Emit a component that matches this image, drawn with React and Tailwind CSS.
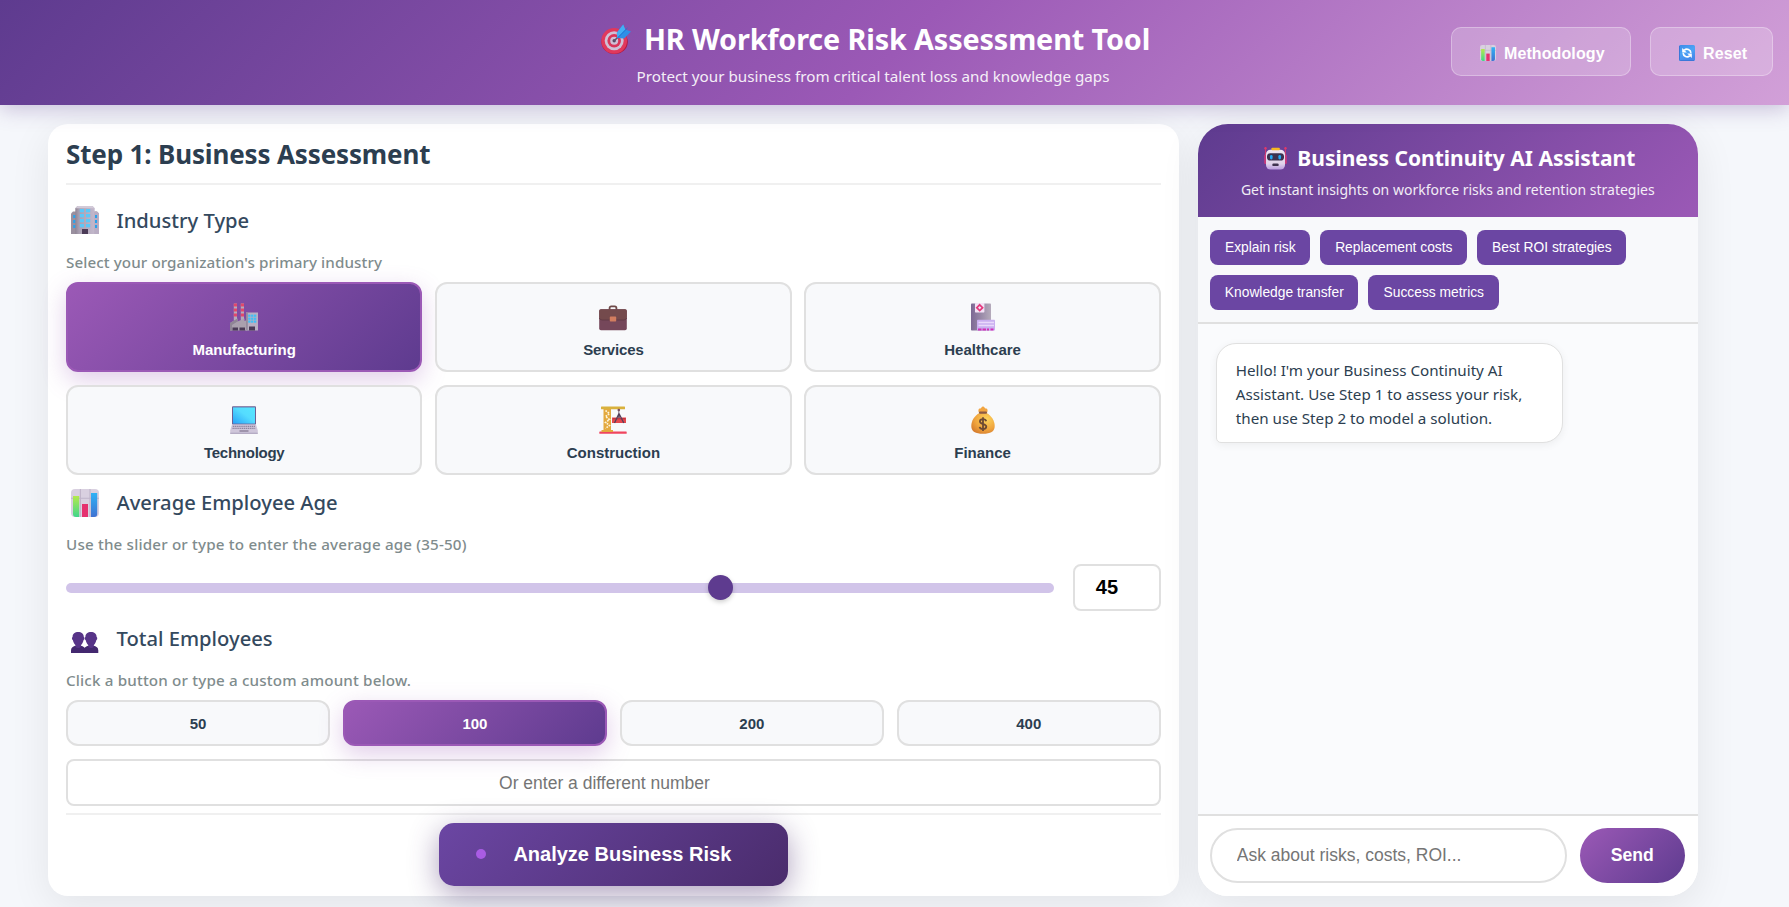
import React from "react";

/* ---------- Pictograms ---------- */

function TargetIcon({ className }) {
  return (
    <svg viewBox="0 0 30 30" className={className}>
      <ellipse cx="13.6" cy="18" rx="13.2" ry="12" fill="#b3173d" />
      <circle cx="13.2" cy="16.8" r="12.9" fill="#e0385c" />
      <circle cx="13.2" cy="16.8" r="9.5" fill="#cfc0d6" />
      <circle cx="13.2" cy="16.8" r="6.8" fill="#d93559" />
      <circle cx="13.2" cy="16.8" r="4" fill="#cfc0d6" />
      <circle cx="13.2" cy="16.8" r="1.7" fill="#5a4a66" />
      <path d="M13.2 16.8 L22 8.2" stroke="#5b5470" strokeWidth="1.6" />
      <path d="M16.4 14 L15.800 8.800 L22.2 0.4 L24.2 5.4 L30 7.6 L23.2 14.400 Z" fill="#2f8fe8" />
      <path d="M15.800 8.800 L22.2 0.4 L24.2 5.4 L16.4 14 Z" fill="#43aef5" />
      <path d="M16.400 14 L26.500 4" stroke="#1f74d0" strokeWidth="1" />
    </svg>
  );
}

function ChartIcon({ className }) {
  return (
    <svg viewBox="0 0 28 28" className={className}>
      <defs>
        <linearGradient id="chartGreen" x1="0" y1="0" x2="0" y2="1">
          <stop offset="0" stopColor="#b4e94c" />
          <stop offset="1" stopColor="#3fd68b" />
        </linearGradient>
        <linearGradient id="chartBlue" x1="0" y1="0" x2="0" y2="1">
          <stop offset="0" stopColor="#2fb2f5" />
          <stop offset="1" stopColor="#3f72d2" />
        </linearGradient>
      </defs>
      <rect width="28" height="28" rx="4" fill="#d9d0e0" />
      <path d="M0 9.3H28M9.4 0V28M19 0V28" stroke="#bfb4c9" strokeWidth="1.1" />
      <path d="M2 7h6.200v21H5a3 3 0 0 1-3-3z" fill="url(#chartGreen)" />
      <rect x="11" y="15" width="6" height="13" fill="#e5306f" />
      <path d="M20 4h6.200v21a3 3 0 0 1-3 3H20z" fill="url(#chartBlue)" />
    </svg>
  );
}

function RefreshIcon({ className }) {
  return (
    <svg viewBox="0 0 16 16" className={className}>
      <defs>
        <linearGradient id="refreshBg" x1="0" y1="0" x2="0.4" y2="1">
          <stop offset="0" stopColor="#3f8be8" />
          <stop offset="0.5" stopColor="#4ba4f6" />
          <stop offset="1" stopColor="#4589ea" />
        </linearGradient>
      </defs>
      <rect width="16" height="16" rx="1.6" fill="url(#refreshBg)" />
      <path d="M0.500 1v13.500a1 1 0 0 0 1 1H15" stroke="#3a78d8" strokeWidth="1" fill="none" />
      <path d="M5.300 5.200A4 4 0 0 1 11.900 7.800" stroke="#fff" strokeWidth="1.700" fill="none" />
      <path d="M10.700 10.800A4 4 0 0 1 4.100 8.200" stroke="#fff" strokeWidth="1.700" fill="none" />
      <path d="M3.200 3v4.600h4.600z" fill="#fff" />
      <path d="M12.800 13V8.400H8.200z" fill="#fff" />
    </svg>
  );
}

function OfficeIcon({ className }) {
  const rows = [3, 8, 13, 18];
  return (
    <svg viewBox="0 0 28 28" className={className}>
      <defs>
        <linearGradient id="officeBody" x1="0" y1="0" x2="1" y2="0">
          <stop offset="0" stopColor="#8f8595" />
          <stop offset="0.2" stopColor="#aaa0b2" />
          <stop offset="1" stopColor="#c3b8cc" />
        </linearGradient>
      </defs>
      <path d="M0 7.500L2 5.500H26L28 7.500V28H0z" fill="#9a909f" />
      <path d="M23.500 5.500H26L28 7.500V28H23.500z" fill="#b9adc3" />
      <path d="M4.300 2.200L6.500 0H21.500L23.700 2.200V28H4.300z" fill="url(#officeBody)" />
      <path d="M4.300 2.200L6.500 0H21.500L23.700 2.200z" fill="#d2cad8" />
      {rows.map((y) => (
        <g key={y} fill="#5cc8f8">
          <rect x="8.800" y={y} width="4.200" height="3.300" />
          <rect x="15" y={y} width="4.200" height="3.300" />
        </g>
      ))}
      {[9, 14, 19].map((y) => (
        <g key={y} fill="#2aa2ec">
          <rect x="2.200" y={y} width="2.100" height="3" />
          <rect x="24" y={y} width="2.100" height="3" />
        </g>
      ))}
      <rect x="11" y="23" width="6" height="5" fill="#4b3b57" />
    </svg>
  );
}

function FactoryIcon({ className }) {
  return (
    <svg viewBox="0 0 28 28" className={className}>
      <rect x="3.800" y="0.500" width="3.200" height="17" fill="#b5aabb" />
      <rect x="10.800" y="0.500" width="3.200" height="17" fill="#b5aabb" />
      {[0.500, 5.500, 10.500].map((y) => (
        <g key={y} fill="#e2486c">
          <rect x="3.800" y={y} width="3.200" height="3" />
          <rect x="10.800" y={y} width="3.200" height="3" />
        </g>
      ))}
      <path d="M0 27.500V20L7.500 15.500V18.600L14.500 15.500V18L17 17V27.500z" fill="#aaa0ae" />
      <path d="M0 20L7.500 15.500V18.600L2 22V27.500H0z" fill="#8f8595" />
      <rect x="16" y="9.500" width="12" height="18" fill="#b9afc2" />
      <rect x="16" y="9.500" width="1.800" height="18" fill="#958b9d" />
      {[11.600, 14.600, 17.500].map((y) => (
        <g key={y} fill="#3fc0f7">
          <rect x="18.200" y={y} width="2.300" height="2.200" />
          <rect x="21.100" y={y} width="2.300" height="2.200" />
          <rect x="24" y={y} width="2.300" height="2.200" />
        </g>
      ))}
      <rect x="2.500" y="24.500" width="5.500" height="3" fill="#4b3b57" />
      <rect x="9.500" y="24.500" width="5.500" height="3" fill="#4b3b57" />
      <rect x="19" y="23.500" width="6" height="4" fill="#4b3b57" />
    </svg>
  );
}

function BriefcaseIcon({ className }) {
  return (
    <svg viewBox="0 0 28 28" className={className}>
      <path d="M10.600 7V5a1.600 1.600 0 0 1 1.600-1.600h3.600A1.600 1.600 0 0 1 17.400 5V7" fill="none" stroke="#6f4a49" strokeWidth="1.800" />
      <rect x="0.200" y="6.200" width="27.600" height="21" rx="1.800" fill="#75475a" />
      <path d="M0.200 8a1.800 1.800 0 0 1 1.800-1.800H26A1.800 1.800 0 0 1 27.800 8V14a3 3 0 0 1-3 3H3.200a3 3 0 0 1-3-3z" fill="#744a4c" />
      <path d="M0.300 15a3 3 0 0 0 2.900 2H24.800a3 3 0 0 0 2.900-2" fill="none" stroke="#5d3743" strokeWidth="0.800" />
      <rect x="10.800" y="13.600" width="6.400" height="5" rx="0.800" fill="#d27d5f" />
    </svg>
  );
}

function HospitalIcon({ className }) {
  return (
    <svg viewBox="0 0 28 28" className={className}>
      <defs>
        <linearGradient id="hospitalTower" x1="0" y1="0" x2="1" y2="0">
          <stop offset="0" stopColor="#7d6894" />
          <stop offset="1" stopColor="#b5abbb" />
        </linearGradient>
      </defs>
      <rect x="2" y="0.500" width="20" height="27" rx="0.800" fill="url(#hospitalTower)" />
      <rect x="6" y="0" width="9.400" height="9.400" rx="0.600" fill="#f3e2f6" />
      <path d="M10.700 1.800L13.600 4.700L10.700 7.600L7.800 4.700z" fill="none" stroke="#e4397c" strokeWidth="1.700" />
      <rect x="8" y="16.800" width="18" height="10.700" rx="0.800" fill="#c9aff0" />
      <path d="M9.500 19.500H25M9.500 22.500H25" stroke="#e9d9fb" strokeWidth="1.400" />
      <path d="M9 26.500H12.500M13.500 26.500H17M18 26.500H20M21.500 26.500H24.500" stroke="#d22eb6" strokeWidth="2" />
    </svg>
  );
}

function LaptopIcon({ className }) {
  return (
    <svg viewBox="0 0 28 28" className={className}>
      <defs>
        <linearGradient id="laptopScreen" x1="0" y1="1" x2="1" y2="0">
          <stop offset="0" stopColor="#27a3f8" />
          <stop offset="0.550" stopColor="#55dcff" />
          <stop offset="1" stopColor="#56e6ff" />
        </linearGradient>
      </defs>
      <rect x="2" y="0.300" width="24" height="18.500" rx="1" fill="#6c5f94" />
      <rect x="3" y="1.400" width="22" height="16.200" fill="url(#laptopScreen)" />
      <path d="M2 18.500H26L27.800 24.500V27.600H0.200V24.500z" fill="#cfc6da" />
      <path d="M2.800 20.300H25.200M2.500 22.300H25.500" stroke="#8f849f" strokeWidth="1.300" strokeDasharray="1.300 0.600" />
      <path d="M9.500 25H18.500" stroke="#8a7f99" strokeWidth="1.400" />
      <path d="M0.200 27.300H27.800" stroke="#9a8fae" strokeWidth="0.800" />
    </svg>
  );
}

function CraneIcon({ className }) {
  return (
    <svg viewBox="0 0 28 28" className={className}>
      <rect x="0.300" y="25.500" width="27.400" height="2.300" rx="0.600" fill="#f0455f" />
      <path d="M4.500 2H12V24H14V26H2.500V24H4.500z" fill="#e3a93f" />
      <path d="M6.500 4.500L10.500 7.500L6.500 10.500L10.500 13.500L6.500 16.500L10.500 19.500L6.500 22.500" fill="none" stroke="#fdf4da" strokeWidth="1.600" strokeDasharray="1.700 1" />
      <rect x="2" y="0.600" width="24" height="2.600" rx="0.500" fill="#d9b13c" />
      <path d="M19.800 3V8" stroke="#8a7d92" strokeWidth="1.200" />
      <circle cx="19.800" cy="4" r="1.300" fill="#7a5060" />
      <rect x="13" y="11.500" width="14" height="5.500" fill="#e5484d" />
      <path d="M14 12.800H26.500" stroke="#b3303b" strokeWidth="1" />
      <path d="M20 7.500L15.500 17M20 7.500L24.800 17M20 7.500V12" fill="none" stroke="#54405c" strokeWidth="1.300" />
    </svg>
  );
}

function MoneyBagIcon({ className }) {
  return (
    <svg viewBox="0 0 28 28" className={className}>
      <defs>
        <radialGradient id="bagBody" cx="0.650" cy="0.300" r="0.800">
          <stop offset="0" stopColor="#fdd45c" />
          <stop offset="0.600" stopColor="#f0a53e" />
          <stop offset="1" stopColor="#d47a2d" />
        </radialGradient>
      </defs>
      <path d="M9.800 6.500C8.800 4 9.800 2 11.300 2.600C12.300 2.600 12.500 0.400 14 0.400C15.500 0.400 15.700 2.600 16.700 2.600C18.200 2 19.200 4 18.200 6.500z" fill="#f2a541" />
      <path d="M10.500 7C5.500 9.500 2.300 15 2.300 20C2.300 25.500 6.500 27.800 14 27.800C21.500 27.800 25.700 25.500 25.700 20C25.700 15 22.500 9.500 17.500 7z" fill="url(#bagBody)" />
      <rect x="10" y="5.500" width="8" height="2.200" rx="1" fill="#8c5a45" />
      <path d="M17.200 15.200C16.800 13.700 15.600 13.200 14 13.200C12.200 13.200 10.900 14.100 10.900 15.600C10.900 18.800 17.300 17.200 17.300 20.600C17.300 22.200 15.900 23.100 14 23.100C12.200 23.100 10.900 22.400 10.600 20.900M14 11.300V25" fill="none" stroke="#6e4a33" strokeWidth="1.800" />
    </svg>
  );
}

function PeopleIcon({ className }) {
  const person = (
    <>
      <path d="M0 21v-2.500c0-2.700 2-4.300 5-4.900h4.500c3 0.600 5 2.200 5 4.900V21z" fill="#43286f" />
      <path d="M1.600 5C1.600 1.800 4 0 7.200 0S12.800 1.800 12.800 5c0.900 0.300 0.900 2.600-0.200 3C12.100 11 10 13 10 13v2c-1.500 1.300-4 1.300-5.500 0v-2S2.300 11 1.800 8C0.700 7.600 0.700 5.300 1.600 5z" fill="#573488" />
    </>
  );
  return (
    <svg viewBox="0 0 28 28" className={className}>
      <g transform="translate(0 7)">{person}</g>
      <g transform="translate(12.800 7)">{person}</g>
    </svg>
  );
}

function RobotIcon({ className }) {
  return (
    <svg viewBox="0 0 23 23" className={className}>
      <defs>
        <linearGradient id="robotFace" x1="0" y1="0" x2="0" y2="1">
          <stop offset="0" stopColor="#efe6f2" />
          <stop offset="0.700" stopColor="#e0d3ea" />
          <stop offset="1" stopColor="#b99bdf" />
        </linearGradient>
      </defs>
      <path d="M1.600 0.500V9M21.400 0.500V9" stroke="#d43b6b" strokeWidth="1" />
      <circle cx="1.500" cy="1.300" r="1.200" fill="#e0386a" />
      <circle cx="21.500" cy="1.300" r="1.200" fill="#e0386a" />
      <rect x="0.200" y="7.500" width="3" height="9.500" rx="1.300" fill="#c83a7c" />
      <rect x="19.800" y="7.500" width="3" height="9.500" rx="1.300" fill="#c83a7c" />
      <rect x="2" y="2.800" width="19" height="19.800" rx="4.500" fill="url(#robotFace)" />
      <rect x="7.300" y="0.800" width="8.600" height="2.400" rx="1" fill="#f6b821" />
      <rect x="3" y="6.200" width="17" height="7.400" rx="3.400" fill="#3c3350" />
      <rect x="6" y="8" width="2.600" height="4.400" rx="1.300" fill="#25a8f2" />
      <rect x="14.400" y="8" width="2.600" height="4.400" rx="1.300" fill="#25a8f2" />
      <rect x="8.300" y="16.500" width="6.400" height="2.600" rx="1.200" fill="#40334f" />
    </svg>
  );
}

/* ---------- Building blocks ---------- */

const sans = "font-['Noto_Sans','Open_Sans',sans-serif]";
const arial = "font-['Liberation_Sans',Arial,sans-serif]";

const active =
  "border-[#9b59b6] bg-[linear-gradient(135deg,#9b59b6,#5e3b8f)] text-white shadow-[0_8px_25px_rgba(155,89,182,0.3)]";
const idle = "border-[#e0e0e0] bg-[#f8f9fb] text-[#2c3e50]";

function HeaderButton({ icon: Icon, children, width }) {
  return (
    <button
      className={`flex h-[49px] items-center gap-2 rounded-[10px] border border-white/30 bg-white/20 pt-[4px] pl-7 text-[16px] font-bold text-white ${arial} ${width}`}
    >
      <Icon className="mb-[2px] size-4" />
      <span className="tracking-[0.1px] whitespace-nowrap">{children}</span>
    </button>
  );
}

function SectionTitle({ icon: Icon, children, lift = "" }) {
  return (
    <div className="flex h-[30px] items-center gap-[17.500px] pl-[5px]">
      <Icon className="size-7" />
      <h3 className={`text-[20.2px] leading-[30px] font-medium text-[#34495e] ${lift}`}>{children}</h3>
    </div>
  );
}

function Hint({ children, spacing }) {
  return <p className={`h-5 text-[15.2px] leading-5 font-medium text-[#7f8c8d] ${spacing}`}>{children}</p>;
}

function IndustryCard({ icon: Icon, label, selected, spacing = "" }) {
  return (
    <button
      className={`flex h-[90px] flex-col items-center rounded-[12px] border-2 pt-[19px] text-[15px] leading-[18px] font-bold ${arial} ${selected ? active : idle}`}
    >
      <Icon className="size-7" />
      <span className={`mt-[10px] ${spacing}`}>{label}</span>
    </button>
  );
}

const industries = [
  { icon: FactoryIcon, label: "Manufacturing", selected: true },
  { icon: BriefcaseIcon, label: "Services", spacing: "tracking-[-0.15px]" },
  { icon: HospitalIcon, label: "Healthcare" },
  { icon: LaptopIcon, label: "Technology", spacing: "tracking-[-0.25px]" },
  { icon: CraneIcon, label: "Construction" },
  { icon: MoneyBagIcon, label: "Finance" },
];

const prompts = [
  ["Explain risk", "w-[100px]"],
  ["Replacement costs", "w-[147px]"],
  ["Best ROI strategies", "w-[149.200px]"],
  ["Knowledge transfer", "w-[148px]"],
  ["Success metrics", "w-[131px]"],
];

/* ---------- Page ---------- */

function Header() {
  return (
    <header className="relative flex h-[105px] bg-[linear-gradient(135deg,#5e3b8f_0%,#9b59b6_50%,#d2a0d8_100%)] pr-4 pl-[295px] text-white shadow-[0_4px_20px_rgba(94,59,143,0.3)]">
      <div className="flex flex-1 flex-col items-center pt-6">
        <h1 className="flex h-[30px] items-center gap-[13px] pl-[5px] text-[28.8px] leading-[30px] font-bold tracking-[-0.14px] whitespace-nowrap">
          <TargetIcon className="size-[30px]" />
          HR Workforce Risk Assessment Tool
        </h1>
        <p className="mt-[10px] h-6 text-[15.2px] leading-6 tracking-[0.02px] whitespace-nowrap opacity-90">
          Protect your business from critical talent loss and knowledge gaps
        </p>
      </div>
      <div className="flex gap-[19px] pt-[27px]">
        <HeaderButton icon={ChartIcon} width="w-[180px]">Methodology</HeaderButton>
        <HeaderButton icon={RefreshIcon} width="w-[123px]">Reset</HeaderButton>
      </div>
    </header>
  );
}

function Assessment() {
  return (
    <section className="h-[772px] w-[1130.800px] rounded-[20px] bg-white px-[18px] shadow-[0_10px_40px_rgba(0,0,0,0.08)]">
      <h2 className="flex h-[61px] items-center border-b-2 border-[#f0f0f0] pt-[2px] text-[26px] font-bold tracking-[-0.15px] text-[#2c3e50]">
        Step 1: Business Assessment
      </h2>

      <div className="pt-5">
        <SectionTitle icon={OfficeIcon}>Industry Type</SectionTitle>
        <div className="mt-[17px]">
          <Hint spacing="tracking-[0.09px]">Select your organization's primary industry</Hint>
        </div>
        <div className="mt-[10px] grid grid-cols-3 gap-[12.8px]">
          {industries.map((item) => (
            <IndustryCard key={item.label} {...item} />
          ))}
        </div>
      </div>

      <div className="pt-[13.200px]">
        <SectionTitle icon={ChartIcon} lift="pb-[2px]">Average Employee Age</SectionTitle>
        <div className="mt-4">
          <Hint spacing="tracking-[0.17px]">Use the slider or type to enter the average age (35-50)</Hint>
        </div>
        <div className="mt-[10px] flex items-center justify-between">
          <div className="mt-px flex h-[10px] w-[988px] items-center rounded-[5px] bg-[#d1c4e9] pl-[642px]">
            <div className="mb-px size-[25px] shrink-0 rounded-full bg-[#5e3b8f] shadow-[0_2px_5px_rgba(0,0,0,0.2)]" />
          </div>
          <div className={`flex h-[47px] w-[87.500px] items-center rounded-[8px] border-2 border-[#e0e0e0] pl-[20.500px] text-[20px] font-bold text-black ${arial}`}>
            45
          </div>
        </div>
      </div>

      <div className="pt-[13px]">
        <SectionTitle icon={PeopleIcon} lift="pb-[2px]">Total Employees</SectionTitle>
        <div className="mt-4">
          <Hint spacing="tracking-[0.16px]">Click a button or type a custom amount below.</Hint>
        </div>
        <div className="mt-[10px] grid grid-cols-4 gap-[12.8px]">
          {[50, 100, 200, 400].map((n) => (
            <button
              key={n}
              className={`h-[46px] rounded-[12px] border-2 pt-[2px] text-[15px] leading-[18px] font-bold ${arial} ${n === 100 ? active : idle}`}
            >
              {n}
            </button>
          ))}
        </div>
        <input
          className={`mt-[13px] block h-[47px] w-full rounded-[8px] border-2 border-[#e0e0e0] bg-transparent pt-[2px] pr-[18px] text-center text-[17.5px] placeholder:text-[#757575] ${arial}`}
          placeholder="Or enter a different number"
        />
      </div>

      <div className="mt-[7px] flex justify-center border-t-2 border-[#f0f0f0] pt-2">
        <button
          className={`flex h-[63px] w-[349px] items-center rounded-[15px] bg-[linear-gradient(135deg,#6b46a3,#4a2c6c)] pl-[37px] text-[20px] font-bold text-white shadow-[0_8px_30px_rgba(74,44,108,0.45)] ${arial}`}
        >
          <span className="size-[10px] rounded-full bg-[#a95ce4]" />
          <span className="ml-[27.500px]">Analyze Business Risk</span>
        </button>
      </div>
    </section>
  );
}

function Assistant() {
  return (
    <aside className="flex h-[772px] w-[500px] flex-col overflow-hidden rounded-[30px] bg-white shadow-[0_10px_40px_rgba(0,0,0,0.08)]">
      <div className="flex h-[93px] flex-col items-center bg-[linear-gradient(135deg,#5e3b8f,#9b59b6)] pt-[22px] text-white">
        <h2 className="flex h-6 items-center gap-[10px] pl-[4px] text-[21px] leading-6 font-bold whitespace-nowrap">
          <RobotIcon className="size-[23px]" />
          Business Continuity AI Assistant
        </h2>
        <p className="mt-[10px] h-5 text-[14px] leading-5 whitespace-nowrap opacity-90">
          Get instant insights on workforce risks and retention strategies
        </p>
      </div>

      <div className="flex h-[107px] flex-wrap content-start gap-[10px] border-b-2 border-[#e0e0e0] bg-[#f8f9fb] px-3 pt-[13px]">
        {prompts.map(([label, width]) => (
          <button
            key={label}
            className={`h-[35px] rounded-[8px] bg-[#6b46a3] pt-[2px] pl-px text-center text-[13.8px] whitespace-nowrap text-white ${arial} ${width}`}
          >
            {label}
          </button>
        ))}
      </div>

      <div className="flex-1 bg-[#fafbfd] px-[18px] pt-[19px]">
        <div className="h-[100px] w-[347px] rounded-[20px] rounded-bl-[5px] border border-[#e0e0e0] bg-white pt-[13.500px] pl-[19px] text-[15.2px] leading-6 text-[#2c3e50] shadow-[0_2px_8px_rgba(0,0,0,0.06)]">
          Hello! I'm your Business Continuity AI
          <br />
          Assistant. Use Step 1 to assess your risk,
          <br />
          then use Step 2 to model a solution.
        </div>
      </div>

      <div className="flex h-[82px] gap-[13px] border-t-2 border-[#e0e0e0] bg-white px-3 pt-3">
        <input
          className={`h-[55px] w-[357px] rounded-[27.500px] border-2 border-[#e0e0e0] pl-[25px] text-[17.5px] placeholder:text-[#757575] ${arial}`}
          placeholder="Ask about risks, costs, ROI..."
        />
        <button
          className={`h-[55px] w-[105px] rounded-[27.500px] bg-[linear-gradient(135deg,#9b59b6,#5e3b8f)] text-[17.6px] font-bold text-white ${arial}`}
        >
          Send
        </button>
      </div>
    </aside>
  );
}

export default function App() {
  return (
    <div className={`h-[907px] overflow-hidden bg-[#f5f7fb] ${sans}`}>
      <Header />
      <main className="flex gap-[19px] pt-[19px] pl-12">
        <Assessment />
        <Assistant />
      </main>
    </div>
  );
}
